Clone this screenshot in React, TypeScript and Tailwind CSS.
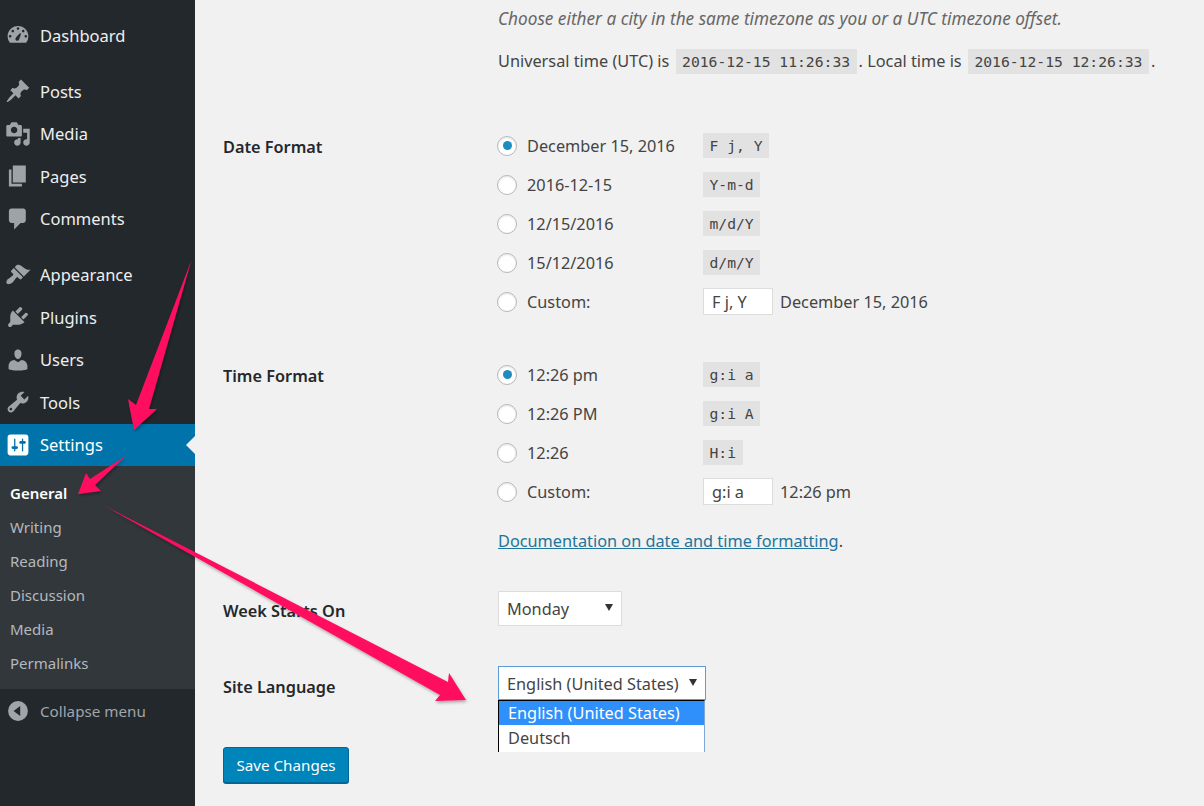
const font = "font-['Noto_Sans','Open_Sans',sans-serif]";
const mono = "font-['DejaVu_Sans_Mono','Liberation_Mono',monospace]";

function DashIcon({ name }: { name: string }) {
  const cls = "w-[26px] h-[26px]";
  const fill = name === "settings" ? "#fff" : "#9ea3a8";
  switch (name) {
    case "dashboard":
      return (
        <svg viewBox="0 0 20 20" className={cls} fill={fill}>
          <path d="M3.76 16h12.48A7.98 7.98 0 0 0 18 11c0-4.42-3.58-8-8-8s-8 3.58-8 8c0 1.9.66 3.63 1.76 5zM10 4c.55 0 1 .45 1 1s-.45 1-1 1-1-.45-1-1 .45-1 1-1zM6 6c.55 0 1 .45 1 1s-.45 1-1 1-1-.45-1-1 .45-1 1-1zm8 0c.55 0 1 .45 1 1s-.45 1-1 1-1-.45-1-1 .45-1 1-1zm-5.37 8.2c-.6-.33-.8-1.1-.46-1.7.33-.6 3.3-4.3 3.9-4 .6.35-1.1 4.8-1.44 5.4-.33.6-1.4.63-2 .3zM4 10c.55 0 1 .45 1 1s-.45 1-1 1-1-.45-1-1 .45-1 1-1zm12 0c.55 0 1 .45 1 1s-.45 1-1 1-1-.45-1-1 .45-1 1-1z" />
        </svg>
      );
    case "posts":
      return (
        <svg viewBox="0 0 20 20" className={cls} fill={fill}>
          <path d="M10.44 3.02l1.82-1.82 6.36 6.35-1.83 1.82c-1.05-.68-2.48-.57-3.41.36l-.75.75c-.92.93-1.04 2.35-.35 3.41l-1.83 1.82-2.41-2.41-2.8 2.79c-.42.42-3.38 2.71-3.8 2.29s1.86-3.39 2.28-3.81l2.79-2.79L4.1 9.36l1.83-1.82c1.05.69 2.48.57 3.4-.36l.75-.75c.93-.92 1.05-2.35.36-3.41z" />
        </svg>
      );
    case "media":
      return (
        <svg viewBox="0 0 20 20" className={cls} fill={fill}>
          <path d="M13 11V4c0-.55-.45-1-1-1h-1.67L9 1H5L3.67 3H2c-.55 0-1 .45-1 1v7c0 .55.45 1 1 1h10c.55 0 1-.45 1-1zM7 4.5c1.38 0 2.5 1.12 2.5 2.5S8.38 9.5 7 9.5 4.5 8.38 4.5 7 5.62 4.5 7 4.5zM14 6h5v10.5c0 1.38-1.12 2.5-2.5 2.5S14 17.88 14 16.5s1.12-2.5 2.5-2.5c.17 0 .34.02.5.05V9h-3V6zm-4 8.05V13h2v3.5c0 1.38-1.12 2.5-2.5 2.5S7 17.88 7 16.5 8.12 14 9.5 14c.17 0 .34.02.5.05z" />
        </svg>
      );
    case "pages":
      return (
        <svg viewBox="0 0 20 20" className={cls} fill={fill}>
          <path d="M6 15V2h10v13H6zm-1 1h8v2H3V5h2v11z" />
        </svg>
      );
    case "comments":
      return (
        <svg viewBox="0 0 20 20" className={cls} fill={fill}>
          <path d="M5 2h9c1.1 0 2 .9 2 2v7c0 1.1-.9 2-2 2h-2l-5 5v-5H5c-1.1 0-2-.9-2-2V4c0-1.1.9-2 2-2z" />
        </svg>
      );
    case "appearance":
      return (
        <svg viewBox="0 0 20 20" className={cls} fill={fill}>
          <path d="M14.48 11.06L7.41 3.99l1.5-1.5c.5-.56 2.3-.47 3.51.32 1.21.8 1.43 1.28 2.91 2.1 1.18.64 2.45 1.26 4.45.85zm-.71.71L6.7 4.7 4.93 6.47c-.39.39-.39 1.02 0 1.41l1.06 1.06c.39.39.39 1.03 0 1.42-.6.6-1.43 1.11-2.21 1.69-.35.26-.7.53-1.01.84C1.43 13.23.78 15.82 1.17 16.21l.71.71c.39.39 2.98-.26 4.32-1.6.31-.31.58-.66.84-1.01.58-.78 1.09-1.61 1.69-2.21.39-.39 1.03-.39 1.42 0l1.06 1.06c.39.39 1.02.39 1.41 0z" />
        </svg>
      );
    case "plugins":
      return (
        <svg viewBox="0 0 20 20" className={cls} fill={fill}>
          <path d="M13.11 4.36L9.87 7.6 8 5.73l3.24-3.24c.35-.34 1.05-.2 1.56.32.52.51.66 1.21.31 1.55zm-8 1.77l.91-1.12 9.01 9.01-1.19.84c-.71.71-2.63 1.16-3.82 1.16H6.14L4.9 17.26c-.59.59-1.54.59-2.12 0-.59-.58-.59-1.53 0-2.12l1.24-1.24v-3.88c0-1.13.4-3.19 1.09-3.89zm7.26 3.97l3.24-3.24c.34-.35 1.04-.21 1.55.31.52.51.66 1.21.31 1.55l-3.24 3.25z" />
        </svg>
      );
    case "users":
      return (
        <svg viewBox="0 0 20 20" className={cls} fill={fill}>
          <path d="M10 9.25c-2.27 0-2.73-3.44-2.73-3.44C7 4.02 7.82 2 9.97 2c2.16 0 2.98 2.02 2.71 3.81 0 0-.41 3.44-2.68 3.44zm0 2.57L12.72 10c2.39 0 4.52 2.33 4.52 4.53v2.49s-3.65 1.13-7.24 1.13c-3.65 0-7.24-1.13-7.24-1.13v-2.49c0-2.25 1.94-4.48 4.47-4.48z" />
        </svg>
      );
    case "tools":
      return (
        <svg viewBox="0 0 20 20" className={cls} fill={fill}>
          <path d="M16.68 9.77c-1.34 1.34-3.3 1.67-4.95.99l-5.41 6.52c-.99.99-2.59.99-3.58 0s-.99-2.59 0-3.57l6.52-5.42c-.68-1.65-.35-3.61.99-4.95 1.28-1.28 3.12-1.62 4.72-1.06l-2.89 2.89 2.82 2.82 2.86-2.87c.53 1.58.18 3.39-1.08 4.65zM3.81 16.21c.4.39 1.04.39 1.43 0 .4-.4.4-1.04 0-1.43-.39-.4-1.03-.4-1.43 0-.39.39-.39 1.03 0 1.43z" />
        </svg>
      );
    default:
      return (
        <svg viewBox="0 0 20 20" className={cls} fill={fill}>
          <path d="M18 16V4c0-1.1-.9-2-2-2H4c-1.1 0-2 .9-2 2v12c0 1.1.9 2 2 2h12c1.1 0 2-.9 2-2zM8 11h1c.55 0 1 .45 1 1s-.45 1-1 1H8v1.5c0 .28-.22.5-.5.5s-.5-.22-.5-.5V13H6c-.55 0-1-.45-1-1s.45-1 1-1h1V5.5c0-.28.22-.5.5-.5s.5.22.5.5V11zm5-2h-1c-.55 0-1-.45-1-1s.45-1 1-1h1V5.5c0-.28.22-.5.5-.5s.5.22.5.5V7h1c.55 0 1 .45 1 1s-.45 1-1 1h-1v5.5c0 .28-.22.5-.5.5s-.5-.22-.5-.5V9z" />
        </svg>
      );
  }
}

function MenuItem({ icon, label, active }: { icon: string; label: string; active?: boolean }) {
  return (
    <div className={`relative flex h-[42.5px] items-center pl-[5px] text-[16.5px] ${active ? "bg-[#0073aa] text-white" : "text-[#eeeeee]"}`}>
      <span className="flex w-[35px] shrink-0"><DashIcon name={icon} /></span>
      <span className="pt-px">{label}</span>
      {active && <span className="absolute right-0 top-[12px] h-0 w-0 border-y-[9px] border-r-[9px] border-y-transparent border-r-[#f1f1f1]" />}
    </div>
  );
}

function Sidebar() {
  const sub = ["Writing", "Reading", "Discussion", "Media", "Permalinks"];
  return (
    <aside className="flex w-[195px] shrink-0 flex-col bg-[#23282d] pt-[14px]">
      <MenuItem icon="dashboard" label="Dashboard" />
      <div className="mt-[13.5px]">
        <MenuItem icon="posts" label="Posts" />
        <MenuItem icon="media" label="Media" />
        <MenuItem icon="pages" label="Pages" />
        <MenuItem icon="comments" label="Comments" />
      </div>
      <div className="mt-[13.5px]">
        <MenuItem icon="appearance" label="Appearance" />
        <MenuItem icon="plugins" label="Plugins" />
        <MenuItem icon="users" label="Users" />
        <MenuItem icon="tools" label="Tools" />
        <MenuItem icon="settings" label="Settings" active />
      </div>
      <div className="flex h-[223px] flex-col bg-[#32373c] pt-[10px] text-[15px]">
        <div className="flex h-[34px] items-center pl-[10px] font-semibold text-white">General</div>
        {sub.map((s) => (
          <div key={s} className="flex h-[34px] items-center pl-[10px] text-[#b4b9be]">{s}</div>
        ))}
      </div>
      <div className="mt-[10px] flex h-[24px] items-center pl-[7px] text-[15.2px] text-[#a0a5aa]">
        <svg viewBox="0 0 20 20" className="mr-[11px] h-[22px] w-[22px]" fill="#a0a5aa">
          <path d="M10 1a9 9 0 1 0 0 18 9 9 0 0 0 0-18zm2 13.5L6 10l6-4.5v9z" />
        </svg>
        Collapse menu
      </div>
    </aside>
  );
}

function Code({ children, className = "" }: { children: string; className?: string }) {
  return (
    <code className={`${mono} ${className} inline-block h-[25px] bg-[#e2e2e2] px-[6.5px] text-[14.7px] leading-[25px] text-[#444]`}>{children}</code>
  );
}

function Radio({ checked }: { checked?: boolean }) {
  return (
    <span className="-ml-px flex h-[20px] w-[20px] shrink-0 items-center justify-center rounded-full border border-[#b4b9be] bg-white shadow-[inset_0_1px_2px_rgba(0,0,0,0.1)]">
      {checked && <span className="h-[9px] w-[9px] rounded-full bg-[#1e8cbe]" />}
    </span>
  );
}

function FormatRow({ text, code, custom, preview }: { text: string; code: string; custom?: boolean; preview?: string }) {
  return (
    <div className="flex h-[39px] items-center">
      <span className="flex w-[205px] shrink-0 items-center gap-[10px]">
        <Radio checked={text === "December 15, 2016" || text === "12:26 pm"} />
        {text}
      </span>
      {custom ? (
        <span className="flex items-center gap-[7px]">
          <span className="flex h-[27px] w-[70px] items-center border border-[#dddddd] bg-white pl-[8px]">{code}</span>
          {preview}
        </span>
      ) : (
        <Code>{code}</Code>
      )}
    </div>
  );
}

function Label({ children, className = "" }: { children: string; className?: string }) {
  return <div className={`w-[275px] shrink-0 font-semibold text-[#23282d] ${className}`}>{children}</div>;
}

function Arrows() {
  return (
    <svg className="pointer-events-none absolute left-0 top-0 h-[806px] w-[1204px]" viewBox="0 0 1204 806">
      <defs>
        <filter id="sh" x="-20%" y="-20%" width="140%" height="140%">
          <feDropShadow dx="1" dy="2" stdDeviation="1.5" floodColor="#000" floodOpacity="0.3" />
        </filter>
      </defs>
      <g fill="#ff0d5f" filter="url(#sh)">
        <polygon points="191.5,260 149,409 157,409 134,430 128,399 136,405" />
        <polygon points="125.5,456 95,485 101,491 78,494 86,473 90,479" />
        <polygon points="103,505 448,682 449,673 466,700 435,701 440,695" />
      </g>
    </svg>
  );
}

export default function App() {
  return (
    <div className={`${font} relative flex h-[806px] w-[1204px] overflow-hidden bg-[#f1f1f1] text-[16.3px] leading-[26px] text-[#444]`}>
      <Sidebar />
      <main className="flex-1 pl-[28px]">
        <div className="pl-[275px]">
          <p className="pt-[6px] text-[17.2px] italic text-[#666]">Choose either a city in the same timezone as you or a UTC timezone offset.</p>
          <p className="mt-[16px] flex h-[26px] items-center whitespace-pre">
            Universal time (UTC) is <Code className="ml-[2px]">2016-12-15 11:26:33</Code><span className="ml-[2px]">. Local time is </span><Code className="ml-[2px]">2016-12-15 12:26:33</Code><span className="ml-[2px]">.</span>
          </p>
        </div>
        <div className="mt-[60px] flex">
          <Label>Date Format</Label>
          <div className="-mt-[8px]">
            <FormatRow text="December 15, 2016" code="F j, Y" />
            <FormatRow text="2016-12-15" code="Y-m-d" />
            <FormatRow text="12/15/2016" code="m/d/Y" />
            <FormatRow text="15/12/2016" code="d/m/Y" />
            <FormatRow text="Custom:" code="F j, Y" custom preview="December 15, 2016" />
          </div>
        </div>
        <div className="mt-[42px] flex">
          <Label>Time Format</Label>
          <div className="-mt-[8px]">
            <FormatRow text="12:26 pm" code="g:i a" />
            <FormatRow text="12:26 PM" code="g:i A" />
            <FormatRow text="12:26" code="H:i" />
            <FormatRow text="Custom:" code="g:i a" custom preview="12:26 pm" />
            <p className="mt-[17px]"><a className="text-[#21759b] underline">Documentation on date and time formatting</a>.</p>
          </div>
        </div>
        <div className="mt-[37px] flex items-center">
          <Label className="pt-[4px]">Week Starts On</Label>
          <div className="relative flex h-[35px] w-[124px] items-center border border-[#dddddd] bg-white pl-[8px]">
            Monday
            <span className="absolute right-[8px] top-[12px] h-0 w-0 border-x-[4px] border-t-[7px] border-x-transparent border-t-[#333]" />
          </div>
        </div>
        <div className="mt-[48px] flex">
          <Label>Site Language</Label>
          <div className="-mt-[8px]">
            <div className="relative flex h-[34px] w-[208px] items-center whitespace-nowrap border border-[#5b9dd9] bg-white pl-[8px] pt-[2px]">
              English (United States)
              <span className="absolute right-[8px] top-[12px] h-0 w-0 border-x-[4px] border-t-[7px] border-x-transparent border-t-[#333]" />
            </div>
            <div className="h-[52px] w-[207px] border-x border-t border-t-black border-l-black border-r-[#7ea6d8] bg-white">
              <div className="flex h-[24px] items-center whitespace-nowrap bg-[#3090fb] pl-[9px] text-white">English (United States)</div>
              <div className="flex h-[24px] items-center pl-[9px] pt-[2px]">Deutsch</div>
            </div>
          </div>
        </div>
        <button className="-mt-[5px] flex h-[36px] w-[126px] items-center justify-center rounded-[3px] border border-[#006799] bg-[#0085ba] text-[15.2px] text-white shadow-[0_1px_0_#006799]">Save Changes</button>
      </main>
      <Arrows />
    </div>
  );
}
